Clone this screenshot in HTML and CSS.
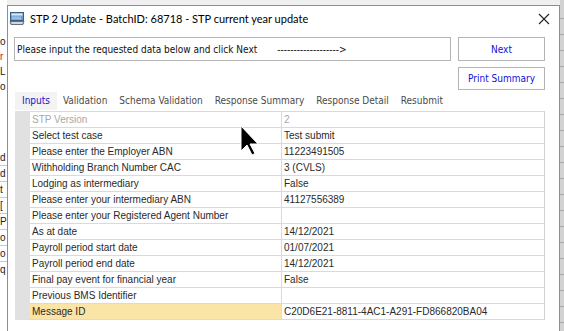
FILE: index.html
```html
<!DOCTYPE html>
<html lang="en">
  <head>
    <meta charset="UTF-8" />
    <title>STP 2 Update</title>
    <link rel="stylesheet" href="styles.css">
  </head>
  <body>
    <div class="screen">
      <div class="behind-left">
        <div class="frag" style="margin-top:34px">o</div>
        <div class="frag red">r</div>
        <div class="frag">L</div>
        <div class="frag">o</div>
        <div class="frag" style="margin-top:56px">d</div>
        <div class="frag line">d</div>
        <div class="frag line">t</div>
        <div class="frag line">[</div>
        <div class="frag line">P</div>
        <div class="frag line">o</div>
        <div class="frag line">o</div>
        <div class="frag line">q</div>
      </div>

      <div class="window">
        <div class="titlebar">
          <svg class="app-icon" width="16" height="13" viewBox="0 0 16 13">
            <rect x="1.5" y="0.5" width="13" height="8" fill="#6d9bd0" stroke="#33618f" />
            <rect x="2.5" y="1.5" width="11" height="2" fill="#dfeaf6" />
            <rect x="3" y="4.5" width="9" height="3" fill="#9fbde0" />
            <path d="M1 9.5 H15 L14 12.5 H2 Z" fill="#b9bec6" stroke="#6b7078" />
            <path d="M3 11 H13" stroke="#eef0f2" />
          </svg>
          <span class="title">STP 2 Update - BatchID: 68718 - STP current year update</span>
          <svg class="close" width="12" height="12" viewBox="0 0 12 12">
            <path d="M1 1 L11 11 M11 1 L1 11" stroke="#222" stroke-width="1.1" />
          </svg>
        </div>

        <div class="content">
          <div class="top">
            <div class="message">Please input the requested data below and click Next<span class="arrow">-------------------&gt;</span></div>
            <button class="btn">Next</button>
            <button class="btn print">Print Summary</button>
          </div>

          <div class="tabs">
            <div class="tab active">Inputs</div>
            <div class="tab">Validation</div>
            <div class="tab">Schema Validation</div>
            <div class="tab">Response Summary</div>
            <div class="tab">Response Detail</div>
            <div class="tab">Resubmit</div>
          </div>

          <div class="page">
            <div class="rowheads"></div>
            <div class="grid">
              <div class="cell disabled">STP Version</div><div class="cell val disabled">2</div>
              <div class="cell">Select test case</div><div class="cell val">Test submit</div>
              <div class="cell">Please enter the Employer ABN</div><div class="cell val">11223491505</div>
              <div class="cell">Withholding Branch Number CAC</div><div class="cell val">3 (CVLS)</div>
              <div class="cell">Lodging as intermediary</div><div class="cell val">False</div>
              <div class="cell">Please enter your intermediary ABN</div><div class="cell val">41127556389</div>
              <div class="cell">Please enter your Registered Agent Number</div><div class="cell val"></div>
              <div class="cell">As at date</div><div class="cell val">14/12/2021</div>
              <div class="cell">Payroll period start date</div><div class="cell val">01/07/2021</div>
              <div class="cell">Payroll period end date</div><div class="cell val">14/12/2021</div>
              <div class="cell">Final pay event for financial year</div><div class="cell val">False</div>
              <div class="cell">Previous BMS Identifier</div><div class="cell val"></div>
              <div class="cell selected">Message ID</div><div class="cell val">C20D6E21-8811-4AC1-A291-FD866820BA04</div>
            </div>
          </div>
        </div>
      </div>

      <div class="behind-right"></div>
    </div>

    <svg class="cursor" width="20" height="32" viewBox="0 0 20 32">
      <path d="M1 1 L1 26 L7 20 L12 30 L15 28.5 L10 19 L18 19 Z" fill="#000" stroke="#fff" stroke-width="1" />
    </svg>
  </body>
</html>
```

FILE: styles.css
```css
html,
body {
  margin: 0;
  height: 100%;
  overflow: hidden;
}
body {
  background: #f0f0f0;
  font-family: "DejaVu Sans Condensed", "DejaVu Sans", sans-serif;
  font-size: 10px;
  color: #333;
  position: relative;
}
.screen {
  display: flex;
  height: 331px;
}

/* windows behind the dialog */
.behind-left {
  width: 7px;
  background: #fff;
  overflow: hidden;
  font-family: "Liberation Sans", sans-serif;
  font-size: 10px;
  color: #222;
  flex-shrink: 0;
}
.frag {
  height: 15px;
  line-height: 15px;
  white-space: nowrap;
}
.frag.red {
  color: #d01010;
}
.frag.line {
  border-top: 1px solid #c8c8c8;
}
.behind-right {
  flex: 1;
  background: repeating-linear-gradient(
    to bottom,
    #d2d2d2 0,
    #d2d2d2 15px,
    #a8a8a8 15px,
    #a8a8a8 16px
  );
  background-position: 0 3px;
}

/* dialog */
.window {
  width: 551px;
  flex-shrink: 0;
  margin-top: 5px;
  border: 1px solid #8e8e8e;
  border-bottom: none;
  background: #fff;
  display: flex;
  flex-direction: column;
}
.titlebar {
  height: 24px;
  display: flex;
  align-items: center;
  padding-left: 1px;
}
.app-icon {
  margin-top: 1px;
}
.title {
  margin-left: 5px;
  font-family: Lato, "Noto Sans", sans-serif;
  font-size: 11px;
  color: #000;
  flex: 1;
}
.close {
  margin-right: 9px;
  margin-top: 1px;
}
.content {
  padding: 7px 14px 0 6px;
  flex: 1;
  display: flex;
  flex-direction: column;
}
.top {
  display: grid;
  grid-template-columns: 437px 87px;
  grid-template-rows: 24px 23px;
  column-gap: 7px;
  row-gap: 6px;
}
.message {
  border: 1px solid #b4b4b4;
  display: flex;
  align-items: center;
  padding-left: 2px;
  color: #111;
  white-space: nowrap;
}
.arrow {
  margin-left: 20px;
}
.btn {
  font: inherit;
  color: #1010d8;
  background: #fff;
  border: 1px solid #b4b4b4;
  padding: 0;
}
.print {
  grid-column: 2;
}
.tabs {
  display: flex;
  margin: 2px 0 0 1px;
  height: 18px;
}
.tab {
  padding: 0 6px;
  line-height: 18px;
  color: #4a4a4a;
}
.tab.active {
  background: #f3f3f3;
  color: #1414c8;
  padding: 0 7px;
}
.page {
  flex: 1;
  display: flex;
  margin-left: 1px;
  padding-top: 1px;
  background: #fff;
  align-items: flex-start;
}
.rowheads {
  width: 15px;
  height: 209px;
  background: #e1e1e1;
}
.grid {
  display: grid;
  grid-template-columns: 251px 263px;
  border-top: 1px solid #dadada;
  border-right: 1px solid #d2d2d2;
  background: #fff;
  font-family: "Liberation Sans", Arial, sans-serif;
  font-size: 10px;
}
.cell {
  height: 15px;
  line-height: 15px;
  border-bottom: 1px solid #dadada;
  padding-left: 2px;
  white-space: nowrap;
  overflow: hidden;
  color: #2a2a2a;
}
.cell.val {
  border-left: 1px solid #dadada;
}
.disabled {
  color: #a8a8a8;
}
.selected {
  background: #fbe5a6;
}

.cursor {
  position: absolute;
  left: 240px;
  top: 125px;
}
```
